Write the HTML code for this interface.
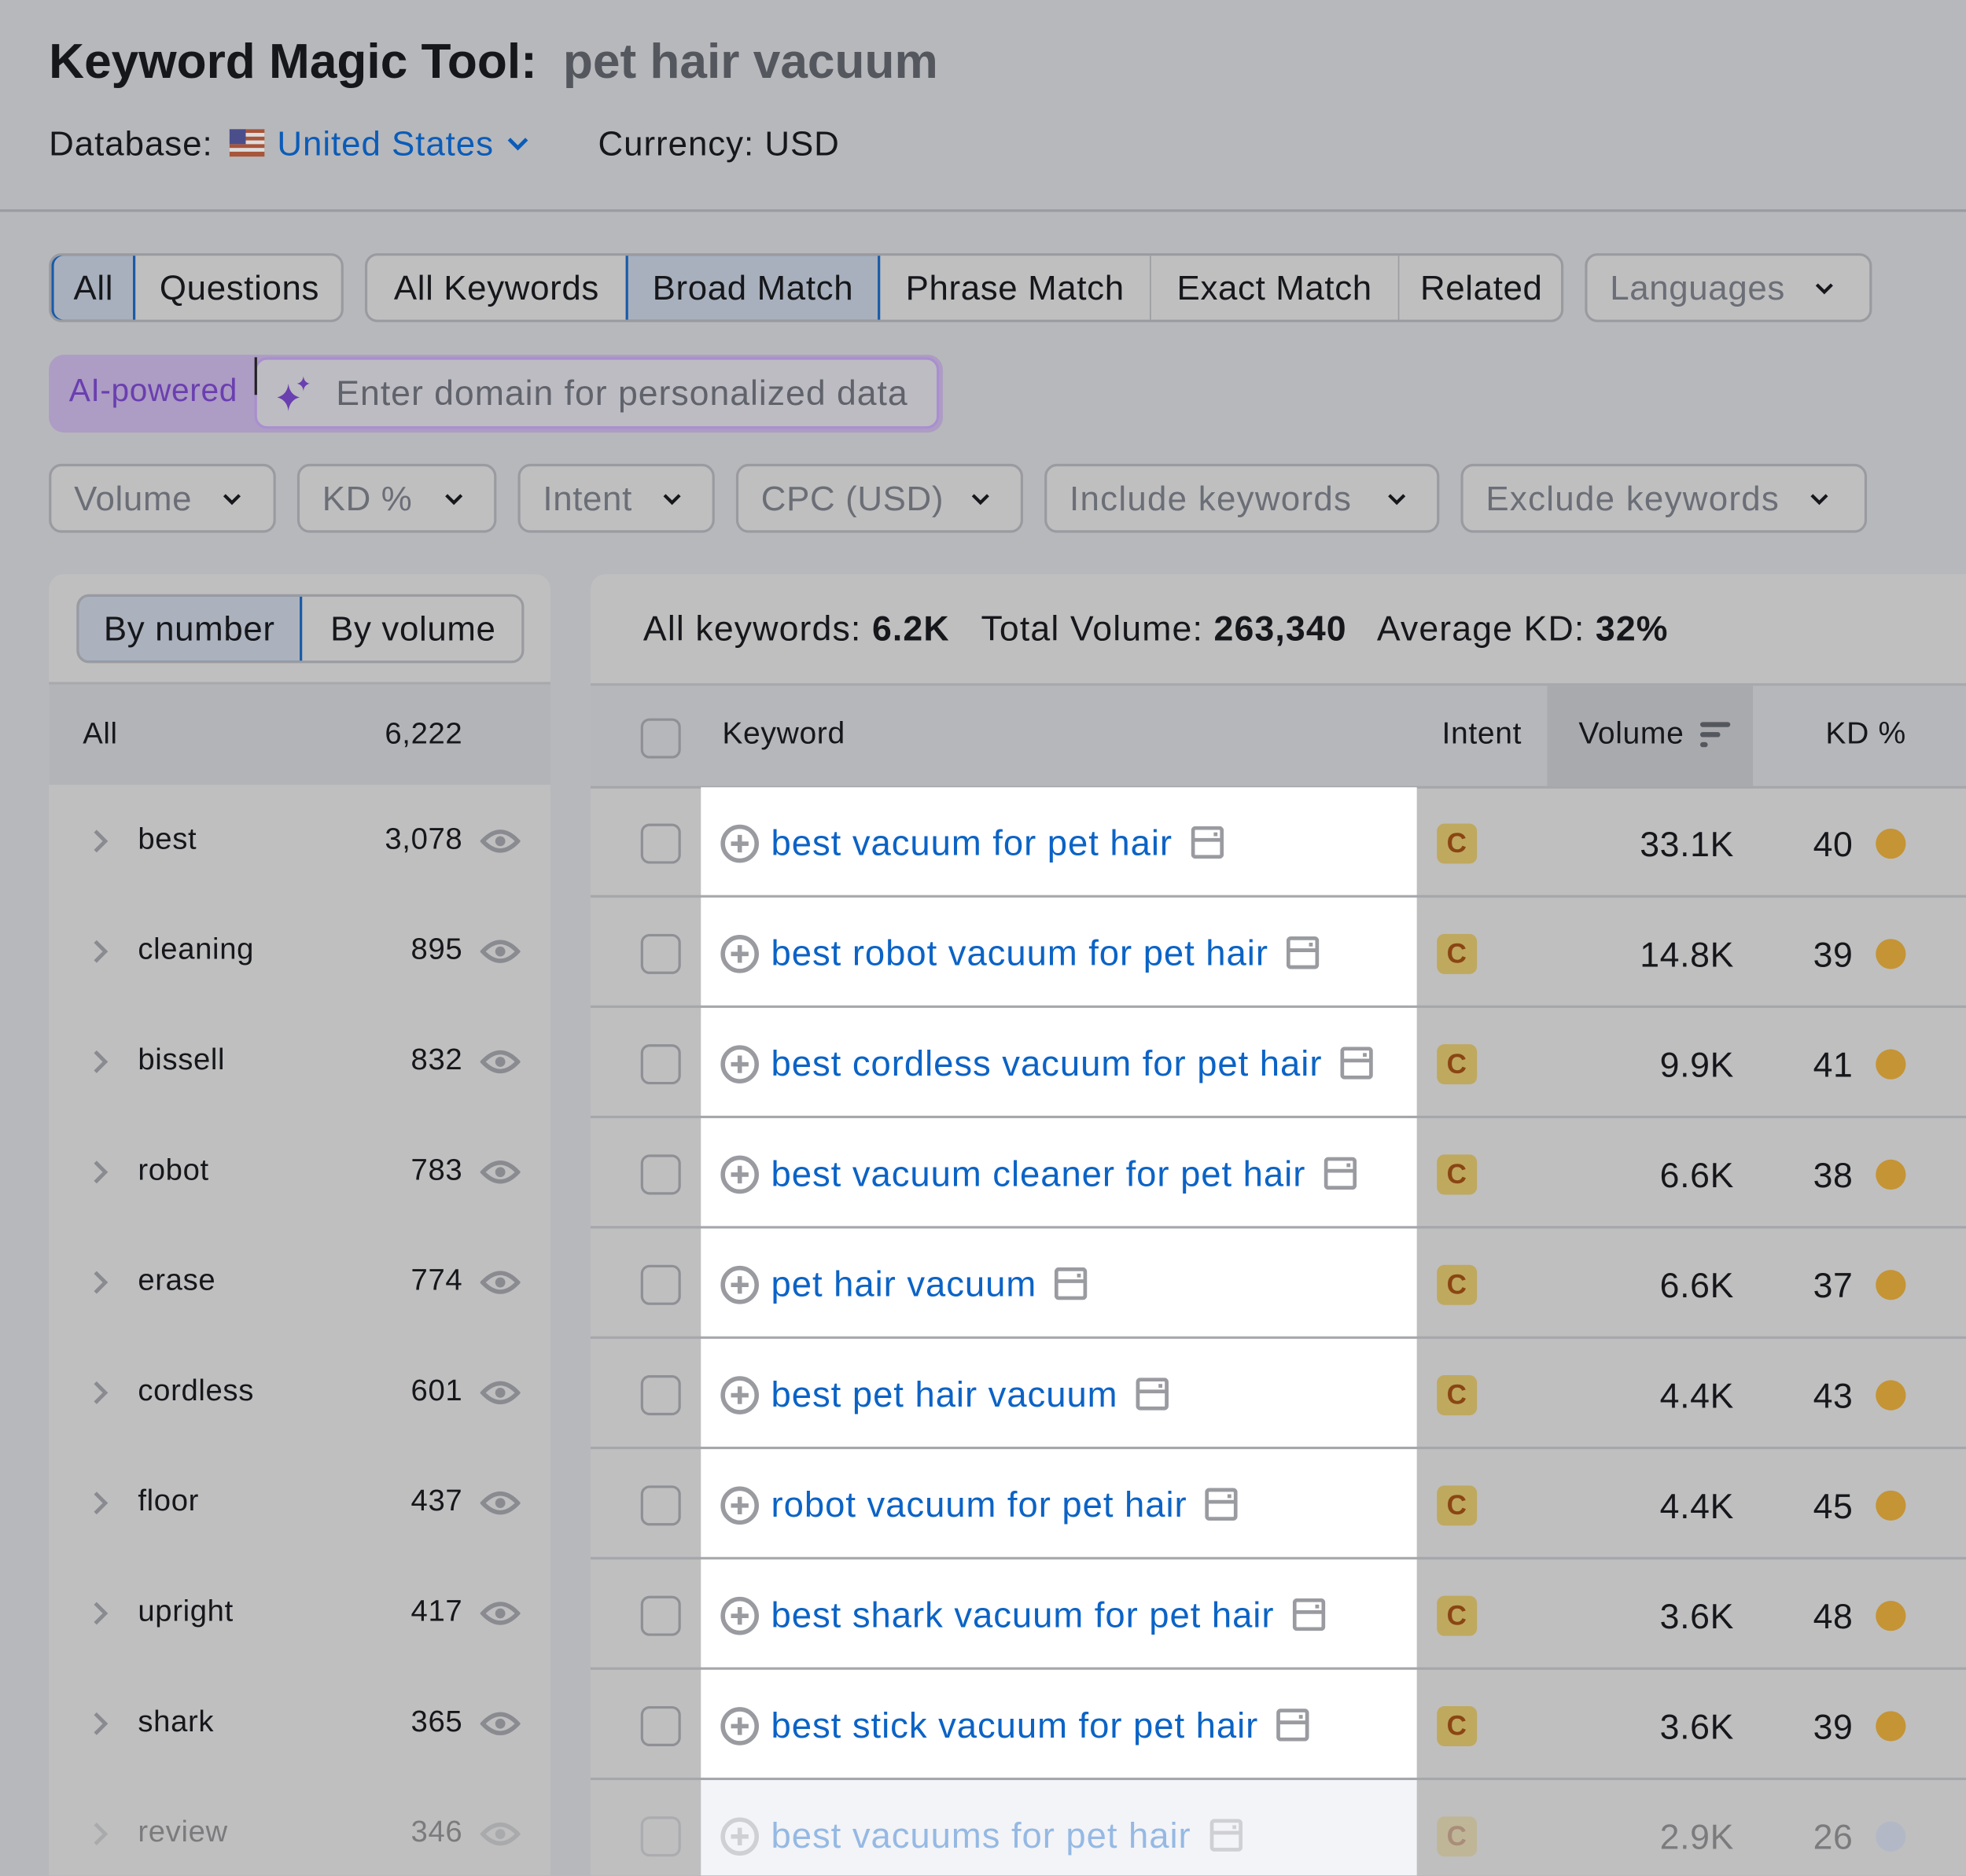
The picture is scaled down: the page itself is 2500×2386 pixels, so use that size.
<!DOCTYPE html>
<html><head><meta charset="utf-8">
<style>
*{box-sizing:border-box;margin:0;padding:0}
html,body{width:2500px;height:2386px;overflow:hidden;background:#b7b8bc}
#w{position:absolute;left:0;top:0;width:1568px;height:1496px;transform:scale(1.59439);transform-origin:0 0;font-family:"Liberation Sans",sans-serif;color:#16171b;background:#b7b8bc;overflow:hidden;letter-spacing:0.4px}
.a{position:absolute;white-space:nowrap}
.btn{position:absolute;height:55px;border:2px solid #9a9ba0;background:#bfbfc0;border-radius:10px;font-size:27.5px;line-height:51px;padding-left:18px;color:#16171b}
.dd{color:#6b6e76}
.chev{position:absolute;top:19px;width:14px;height:14px}
.seg{position:absolute;top:0;height:55px;line-height:51px;font-size:27.5px;text-align:center;border-right:1.5px solid #9a9ba0}
.lrow{position:absolute;left:39px;width:400px;height:88px;font-size:24px}
.rrow{position:absolute;left:471px;width:1097px;height:88px;border-bottom:2px solid #a6a7ab}
.cb{position:absolute;left:40px;top:29px;width:32px;height:32px;border:2px solid #8f9095;border-radius:7px}
.kw{position:absolute;left:88px;top:0;width:571px;height:86px;background:#fff}
.kwt{position:absolute;left:56px;top:29px;font-size:28.5px;letter-spacing:0.6px;color:#0b63c6;white-space:nowrap}
.badge{position:absolute;left:675px;top:29px;width:32px;height:32px;border-radius:6px;background:#bfa95e;color:#8a4513;font-size:22px;font-weight:bold;text-align:center;line-height:32px}
.vol{position:absolute;right:185px;top:30px;font-size:28px;text-align:right}
.kd{position:absolute;right:90px;top:30px;font-size:28px;text-align:right}
.dot{position:absolute;left:1025px;top:33px;width:24px;height:24px;border-radius:50%;background:#c59434}
.f{opacity:.4}
</style></head><body><div id="w">
<div class="a" style="left:39px;top:28px;font-size:39px;font-weight:bold;letter-spacing:0px">Keyword Magic Tool:</div>
<div class="a" style="left:449px;top:28px;font-size:39px;font-weight:bold;color:#55575e;letter-spacing:0px">pet hair vacuum</div>
<div class="a" style="left:39px;top:99px;font-size:27.5px;letter-spacing:0.6px">Database:</div>
<svg class="a" style="left:183px;top:103px" width="28" height="22" viewBox="0 0 28 22"><rect width="28" height="22" fill="#a8553a"/><rect y="3" width="28" height="3" fill="#ddd"/><rect y="9" width="28" height="3" fill="#ddd"/><rect y="15" width="28" height="3" fill="#ddd"/><rect width="13" height="12" fill="#4a4f8c"/></svg>
<div class="a" style="left:221px;top:99px;font-size:27.5px;color:#0b5cb8;letter-spacing:0.6px">United States</div>
<svg class="a" style="left:404px;top:108px" width="18" height="14" viewBox="0 0 18 14"><path d="M2 3 L9 10 L16 3" stroke="#0b5cb8" stroke-width="3" fill="none"/></svg>
<div class="a" style="left:477px;top:99px;font-size:27.5px;letter-spacing:0.6px">Currency: USD</div>
<div class="a" style="left:0;top:167px;width:1568px;height:2px;background:#9a9ba0"></div>

<div class="btn" style="left:39px;top:202px;width:235px;padding:0;overflow:hidden">
 <div class="seg" style="left:0;width:67px;background:#a8b0bd;border:2px solid #1a5aa8;top:-2px;height:55px;border-radius:10px 0 0 10px">All</div>
 <div class="seg" style="left:67px;width:166px;border:none">Questions</div>
</div>
<div class="btn" style="left:291px;top:202px;width:956px;padding:0;overflow:hidden">
 <div class="seg" style="left:0;width:207px">All Keywords</div>
 <div class="seg" style="left:206px;width:203px;background:#a8b0bd;border:2px solid #1a5aa8;top:-2px;height:55px">Broad Match</div>
 <div class="seg" style="left:409px;width:216px">Phrase Match</div>
 <div class="seg" style="left:625px;width:198px">Exact Match</div>
 <div class="seg" style="left:823px;width:131px;border:none">Related</div>
</div>
<div class="btn dd" style="left:1264px;top:202px;width:229px">Languages<svg class="chev" style="left:182px" viewBox="0 0 14 14"><path d="M1 4 L7 10 L13 4" stroke="#16171b" stroke-width="2.6" fill="none"/></svg></div>

<div class="a" style="left:39px;top:283px;width:713px;height:62px;background:#ad9cc4;border-radius:12px"></div>
<div class="a" style="left:55px;top:298px;font-size:25.5px;color:#6a3fb0">AI-powered</div>
<div class="a" style="left:203px;top:285px;width:546px;height:57px;background:#bdbcc2;border:2px solid #a98fcf;border-radius:10px"></div>
<div class="a" style="left:203px;top:285px;width:2px;height:30px;background:#222"></div>
<svg class="a" style="left:219px;top:298px" width="32" height="32" viewBox="0 0 32 32"><path d="M11 8 Q12 17 20 19 Q12 21 11 30 Q10 21 2 19 Q10 17 11 8Z" fill="#6a3fb0"/><path d="M23 2 Q23.5 7 28 8 Q23.5 9 23 14 Q22.5 9 18 8 Q22.5 7 23 2Z" fill="#6a3fb0"/></svg>
<div class="a" style="left:268px;top:298px;font-size:28px;color:#60636b;letter-spacing:0.6px">Enter domain for personalized data</div>

<div class="btn dd" style="left:39px;top:370px;width:181px">Volume<svg class="chev" style="left:137px" viewBox="0 0 14 14"><path d="M1 4 L7 10 L13 4" stroke="#16171b" stroke-width="2.6" fill="none"/></svg></div>
<div class="btn dd" style="left:237px;top:370px;width:159px">KD %<svg class="chev" style="left:116px" viewBox="0 0 14 14"><path d="M1 4 L7 10 L13 4" stroke="#16171b" stroke-width="2.6" fill="none"/></svg></div>
<div class="btn dd" style="left:413px;top:370px;width:157px">Intent<svg class="chev" style="left:114px" viewBox="0 0 14 14"><path d="M1 4 L7 10 L13 4" stroke="#16171b" stroke-width="2.6" fill="none"/></svg></div>
<div class="btn dd" style="left:587px;top:370px;width:229px">CPC (USD)<svg class="chev" style="left:186px" viewBox="0 0 14 14"><path d="M1 4 L7 10 L13 4" stroke="#16171b" stroke-width="2.6" fill="none"/></svg></div>
<div class="btn dd" style="left:833px;top:370px;width:315px;letter-spacing:0.8px">Include keywords<svg class="chev" style="left:272px" viewBox="0 0 14 14"><path d="M1 4 L7 10 L13 4" stroke="#16171b" stroke-width="2.6" fill="none"/></svg></div>
<div class="btn dd" style="left:1165px;top:370px;width:324px;letter-spacing:0.8px">Exclude keywords<svg class="chev" style="left:277px" viewBox="0 0 14 14"><path d="M1 4 L7 10 L13 4" stroke="#16171b" stroke-width="2.6" fill="none"/></svg></div>

<div class="a" style="left:39px;top:458px;width:400px;height:1100px;background:#bfbfc0;border-radius:12px 12px 0 0"></div>
<div class="btn" style="left:61px;top:474px;width:357px;padding:0;overflow:hidden">
 <div class="seg" style="left:-2px;width:180px;background:#abb2bd;border:2px solid #1a5aa8;top:-2px;height:55px;border-radius:10px 0 0 10px">By number</div>
 <div class="seg" style="left:178px;width:177px;border:none">By volume</div>
</div>
<div class="a" style="left:39px;top:544px;width:400px;height:2px;background:#a8a9ad"></div>
<div class="a" style="left:39px;top:546px;width:400px;height:80px;background:#b3b4b8"></div>
<div class="a" style="left:66px;top:572px;font-size:24px">All</div>
<div class="a" style="left:250px;width:119px;text-align:right;top:572px;font-size:24px">6,222</div>

<div class="a" style="left:471px;top:458px;width:1110px;height:1100px;background:#bfbfc0;border-radius:12px 0 0 0"></div>
<div class="a" style="left:513px;top:486px;font-size:28px;letter-spacing:0.7px">All keywords: <b>6.2K</b>&nbsp;&nbsp; Total Volume: <b>263,340</b>&nbsp;&nbsp; Average KD: <b>32%</b></div>
<div class="a" style="left:471px;top:545px;width:1097px;height:84px;background:#b6b7bb;border-top:2px solid #a8a9ad;border-bottom:2px solid #a6a7ab"></div>
<div class="a" style="left:1234px;top:547px;width:164px;height:80px;background:#a9aaae"></div>
<div class="a" style="left:511px;top:573px;width:32px;height:32px;border:2px solid #8f9095;border-radius:7px"></div>
<div class="a" style="left:576px;top:572px;font-size:24.5px">Keyword</div>
<div class="a" style="left:1150px;top:572px;font-size:24.5px">Intent</div>
<div class="a" style="left:1259px;top:572px;font-size:24.5px">Volume</div>
<svg class="a" style="left:1355px;top:575px" width="26" height="22" viewBox="0 0 26 22"><rect x="1" y="1" width="24" height="4" rx="2" fill="#55575e"/><rect x="1" y="9" width="16" height="4" rx="2" fill="#55575e"/><rect x="1" y="17" width="6" height="4" rx="2" fill="#55575e"/></svg>
<div class="a" style="left:1456px;top:572px;font-size:24.5px">KD %</div>

<div id="rows"></div>
<script>
var L=[["best","3,078"],["cleaning","895"],["bissell","832"],["robot","783"],["erase","774"],["cordless","601"],["floor","437"],["upright","417"],["shark","365"],["review","346"]];
var R=[["best vacuum for pet hair","33.1K","40"],["best robot vacuum for pet hair","14.8K","39"],["best cordless vacuum for pet hair","9.9K","41"],["best vacuum cleaner for pet hair","6.6K","38"],["pet hair vacuum","6.6K","37"],["best pet hair vacuum","4.4K","43"],["robot vacuum for pet hair","4.4K","45"],["best shark vacuum for pet hair","3.6K","48"],["best stick vacuum for pet hair","3.6K","39"],["best vacuums for pet hair","2.9K","26"]];
var h="";
for(var i=0;i<10;i++){
 var y=626+i*88, f=i==9?" f":"", op=i==9?"opacity:.4;":"";
 h+='<div class="lrow" style="top:'+y+'px;'+op+'"><svg style="position:absolute;left:34px;top:35px" width="14" height="20" viewBox="0 0 14 20"><path d="M3 2 L11 10 L3 18" stroke="#8a8b90" stroke-width="3" fill="none"/></svg><div class="a" style="left:71px;top:30px">'+L[i][0]+'</div><div class="a" style="left:200px;width:130px;text-align:right;top:30px">'+L[i][1]+'</div><svg style="position:absolute;left:344px;top:29px" width="32" height="32" viewBox="0 0 32 32"><path d="M2 16 Q16 1 30 16 Q16 31 2 16Z" stroke="#8a8b90" stroke-width="3.5" fill="none"/><circle cx="16" cy="16" r="4" fill="#8a8b90"/></svg></div>';
 h+='<div class="rrow" style="top:'+(y+2)+'px;"><div class="cb'+f+'"></div><div class="kw" style="'+(i==9?'background:#f3f4f8':'')+'"><div class="'+f+'"><svg style="position:absolute;left:15px;top:29px" width="32" height="32" viewBox="0 0 32 32"><circle cx="16" cy="16" r="13.5" stroke="#9a9ba0" stroke-width="3.5" fill="none"/><path d="M16 9V23M9 16H23" stroke="#9a9ba0" stroke-width="3.5"/></svg><span class="kwt">'+R[i][0]+' <svg style="vertical-align:-3px;margin-left:6px" width="26" height="26" viewBox="0 0 26 26"><rect x="1.5" y="1.5" width="23" height="23" rx="2" stroke="#9a9ba0" stroke-width="3" fill="none"/><path d="M1.5 11H24.5" stroke="#9a9ba0" stroke-width="3"/><rect x="18" y="5" width="3" height="3" fill="#9a9ba0"/></svg></span></div></div><div class="badge'+f+'">C</div><div class="vol'+f+'">'+R[i][1]+'</div><div class="kd'+f+'">'+R[i][2]+'</div><div class="dot'+f+'" style="'+(i==9?'background:#9fb0cf':'')+'"></div></div>';
}
document.getElementById("rows").innerHTML=h;
</script>
</div></body></html>
